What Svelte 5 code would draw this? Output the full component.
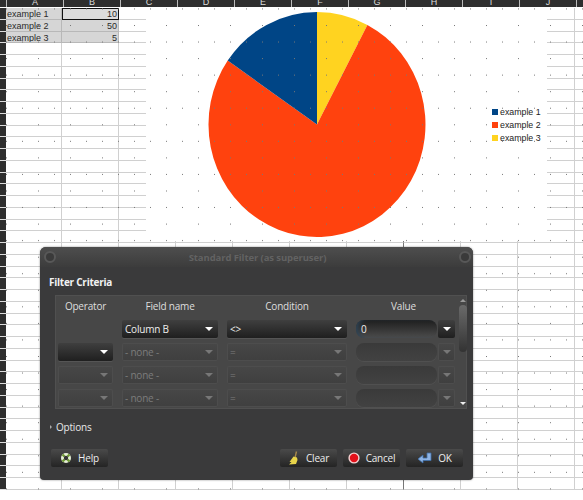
<script>
	const columns = ['A', 'B', 'C', 'D', 'E', 'F', 'G', 'H', 'I', 'J', 'K'];
	const rowCount = 41;
	const rows = Array.from({ length: rowCount }, (_, i) => i);

	const sample = [
		['example 1', 10],
		['example 2', 50],
		['example 3', 5]
	];

	// chart is an ellipse, LibreOffice stretches it with the frame
	const cx = 317;
	const cy = 124.5;
	const rx = 108.5;
	const ry = 112.5;

	function point(value) {
		const a = (value / 65) * Math.PI * 2;
		return `${(cx + rx * Math.sin(a)).toFixed(1)} ${(cy - ry * Math.cos(a)).toFixed(1)}`;
	}

	function slice(from, to) {
		const large = to - from > 32.5 ? 1 : 0;
		return `M${cx} ${cy}L${point(from)}A${rx} ${ry} 0 ${large} 1 ${point(to)}Z`;
	}

	const slices = [
		{ color: '#ffd320', d: slice(0, 5) },
		{ color: '#ff420e', d: slice(5, 55) },
		{ color: '#004586', d: slice(55, 65) }
	];

	const legend = [
		{ label: 'example 1', color: '#004586', y: 112 },
		{ label: 'example 2', color: '#ff420e', y: 125 },
		{ label: 'example 3', color: '#ffd320', y: 138 }
	];

	const filters = [
		{ field: 'Column B', condition: '<>', value: '0', active: true, noOp: true },
		{ field: '- none -', condition: '=', value: '', active: false, opActive: true },
		{ field: '- none -', condition: '=', value: '', active: false },
		{ field: '- none -', condition: '=', value: '', active: false }
	];
</script>

<div class="sheet">
	<div class="col-head">
		<span class="corner"></span>
		{#each columns as c}
			<span class="col-label">{c}</span>
		{/each}
	</div>
	{#each rows as r}
		<div class="row">
			<span class="row-label"></span>
			{#each columns as c, i}
				<span
					class="cell"
					class:selected={r < 3 && i < 2}
					class:cursor={r === 0 && i === 1}
					class:num={i === 1}
					class:page-break={i === 6}
				>
					{#if r < 3 && i < 2}{sample[r][i]}{/if}
				</span>
			{/each}
		</div>
	{/each}

	<svg class="canvas" width="583" height="500" viewBox="0 0 583 500">
		<defs>
			<pattern id="dots" patternUnits="userSpaceOnUse" x="6" y="25" width="32" height="33.1">
				<rect x="0" y="0" width="1" height="1" fill="#777" />
				<rect x="0" y="16.5" width="1" height="1" fill="#777" />
				<rect x="16" y="16.5" width="1" height="1" fill="#777" />
			</pattern>
		</defs>
		<rect x="146" y="8" width="401" height="233" fill="#fff" />
		{#each slices as s}
			<path d={s.d} fill={s.color} />
		{/each}
		{#each legend as l}
			<rect x="492" y={l.y - 3} width="6" height="6" fill={l.color} />
			<text x="500" y={l.y + 3} class="legend">{l.label}</text>
		{/each}
		<rect x="6" y="8" width="577" height="492" fill="url(#dots)" />
	</svg>

	<div class="dialog">
		<div class="titlebar">
			<span class="win-btn"></span>
			<span class="title">Standard Filter (as superuser)</span>
			<span class="win-btn"></span>
		</div>
		<div class="body">
			<div class="heading">Filter Criteria</div>
			<div class="panel">
				<div class="table">
					<div class="th">Operator</div>
					<div class="th">Field name</div>
					<div class="th">Condition</div>
					<div class="th value-head">Value</div>
					{#each filters as f}
						{#if f.noOp}
							<span></span>
						{:else}
							<div class="combo" class:off={!f.opActive}><span></span><i></i></div>
						{/if}
						<div class="combo" class:off={!f.active}><span>{f.field}</span><i></i></div>
						<div class="combo" class:off={!f.active}><span>{f.condition}</span><i></i></div>
						<div class="value-cell">
							<div class="entry" class:off={!f.active}>{f.value}</div>
							<div class="drop" class:off={!f.active}><i></i></div>
						</div>
					{/each}
				</div>
				<div class="scrollbar">
					<b class="up"></b>
					<div class="thumb"></div>
					<b class="down"></b>
				</div>
			</div>
			<div class="options"><b></b>Options</div>
			<div class="buttons">
				<button class="help">
					<svg width="12" height="12" viewBox="0 0 12 12">
						<circle cx="6" cy="6" r="5" fill="#e8f0d8" />
						<path d="M2.5 2.5L4.5 4.5M9.5 2.5L7.5 4.5M2.5 9.5L4.5 7.5M9.5 9.5L7.5 7.5" stroke="#6f9a35" stroke-width="2.4" />
						<circle cx="6" cy="6" r="2.2" fill="#333" />
					</svg>
					Help
				</button>
				<span class="spacer"></span>
				<button>
					<svg width="12" height="14" viewBox="0 0 12 14">
						<path d="M8.5 0.5L7.2 6" stroke="#a8894a" stroke-width="1.4" />
						<path d="M5.5 5.5L9 6.5L9.5 9L8 13L1 13.5L3.5 11L1.5 11Z" fill="#e8d44a" />
					</svg>
					Clear
				</button>
				<button>
					<svg width="12" height="12" viewBox="0 0 12 12">
						<circle cx="6" cy="6" r="5.6" fill="#f2d0d0" />
						<circle cx="6" cy="6" r="4.2" fill="#e3101a" />
					</svg>
					Cancel
				</button>
				<button>
					<svg width="15" height="12" viewBox="0 0 15 12">
						<path d="M14 1H10V6H6V3L1 7L6 11V8.5H14Z" fill="#8fb4e4" stroke="#3f6ea8" stroke-width="0.8" />
					</svg>
					OK
				</button>
			</div>
		</div>
	</div>
</div>

<style>
	:global(body) {
		margin: 0;
		background: #fff;
	}

	.sheet {
		position: relative;
		width: 583px;
		height: 500px;
		overflow: hidden;
		font-family: 'Liberation Sans', Arial, sans-serif;
		font-size: 9px;
		color: #2a2a2a;
	}

	.col-head {
		display: flex;
		height: 7px;
		margin-bottom: 1px;
		overflow: hidden;
		background: #2e2e2e;
	}

	.corner {
		flex: 0 0 6px;
	}

	.col-label {
		flex: 0 0 57px;
		box-sizing: border-box;
		border-left: 1px solid #bbb;
		color: #ddd;
		line-height: 0;
		padding-top: 2px;
		text-align: center;
	}

	.col-label:first-of-type {
		flex-basis: 56px;
	}

	.row {
		display: flex;
		height: 11.75px;
	}

	.row-label {
		flex: 0 0 6px;
		box-sizing: border-box;
		background: #2e2e2e;
		border-bottom: 1px solid #ddd;
	}

	.cell {
		flex: 0 0 57px;
		box-sizing: border-box;
		border-bottom: 1px solid #d0d0d0;
		border-right: 1px solid #d0d0d0;
		padding: 0 1px;
		line-height: 12px;
		white-space: nowrap;
		overflow: hidden;
	}

	.row-label + .cell {
		flex-basis: 56px;
	}

	.selected {
		background: #d6d6d6;
		border-color: #b8b8b8;
	}

	.num {
		text-align: right;
	}

	.cursor {
		background: #dcdcdc;
		outline: 1px solid #111;
		outline-offset: -1px;
		border-color: #111;
	}

	.page-break {
		border-right-color: #777;
	}

	.canvas {
		position: absolute;
		top: 0;
		left: 0;
	}

	.legend {
		font-size: 8.8px;
		fill: #222;
	}

	.dialog {
		position: absolute;
		top: 247px;
		left: 40px;
		width: 433px;
		height: 233px;
		box-sizing: border-box;
		border-radius: 6px 6px 4px 4px;
		background: #3a3a3b;
		box-shadow: 0 0 2px rgba(0, 0, 0, 0.5);
		font-family: 'Open Sans', sans-serif;
		font-size: 10px;
		letter-spacing: -0.2px;
		color: #e4e4e4;
		display: flex;
		flex-direction: column;
	}

	.titlebar {
		display: flex;
		align-items: center;
		justify-content: space-between;
		height: 20px;
		padding: 0 2px 0 4px;
		border-radius: 6px 6px 0 0;
		background: linear-gradient(#4e4e4e, #3c3c3c);
	}

	.win-btn {
		width: 8px;
		height: 8px;
		border: 2px solid #585858;
		border-radius: 50%;
		background: #3a3a3a;
	}

	.title {
		font-size: 9.5px;
		font-weight: 700;
		letter-spacing: -0.1px;
		color: #626262;
	}

	.body {
		flex: 1;
		display: flex;
		flex-direction: column;
		padding: 8px 10px 13px 9px;
		min-height: 0;
	}

	.heading {
		font-weight: 700;
		color: #f2f2f2;
		line-height: 14px;
		margin-bottom: 6px;
		font-size: 10px;
		letter-spacing: -0.25px;
	}

	.panel {
		display: flex;
		box-sizing: border-box;
		width: 412px;
		height: 114px;
		margin-left: 6px;
		padding: 0 1px 0 2px;
		border: 1px solid #505050;
		background: #474747;
	}

	.table {
		display: grid;
		grid-template-columns: 55px 96px 120px 99px;
		grid-template-rows: 19px repeat(4, 18px);
		column-gap: 9px;
		row-gap: 5px;
	}

	.th {
		text-align: center;
		line-height: 20px;
		color: #dedede;
		grid-row: 1;
	}

	.value-head {
		padding-right: 4px;
	}

	.combo {
		display: flex;
		align-items: center;
		justify-content: space-between;
		padding: 0 5px 0 3px;
		border-radius: 2px;
		background: linear-gradient(#3f3f3f, #1f1f1f);
		color: #eee;
		box-shadow: 0 1px 0 #555;
	}

	.combo i,
	.drop i {
		width: 0;
		height: 0;
		border-left: 4px solid transparent;
		border-right: 4px solid transparent;
		border-top: 4px solid #fff;
	}

	.combo.off,
	.drop.off {
		background: linear-gradient(#474747, #3f3f3f);
		color: #7c7c7c;
		box-shadow: 0 0 0 1px #4d4d4d inset;
	}

	.off i {
		border-top-color: #777;
	}

	.value-cell {
		display: flex;
		gap: 1px;
	}

	.entry {
		flex: 1;
		display: flex;
		align-items: center;
		padding-left: 5px;
		border-radius: 8px;
		background: linear-gradient(#1e1e1e, #4c4c4c);
		color: #eee;
		box-shadow: inset 4px 0 4px -2px #2c4458;
	}

	.entry.off {
		background: linear-gradient(#3a3a3a, #424242);
		box-shadow: 0 1px 0 #505050;
	}

	.drop {
		flex: 0 0 17px;
		display: flex;
		align-items: center;
		justify-content: center;
		border-radius: 2px;
		background: linear-gradient(#3f3f3f, #1f1f1f);
	}

	.scrollbar {
		flex: 0 0 9px;
		margin-left: 3px;
		display: flex;
		flex-direction: column;
		align-items: center;
		padding: 3px 0;
		box-sizing: border-box;
	}

	.scrollbar b {
		width: 0;
		height: 0;
		border-left: 3px solid transparent;
		border-right: 3px solid transparent;
	}

	.up {
		border-bottom: 3px solid #999;
	}

	.down {
		margin-top: auto;
		border-top: 3px solid #eee;
	}

	.thumb {
		width: 8px;
		height: 47px;
		margin-top: 3px;
		border-radius: 4px;
		background: linear-gradient(#6a6a6a, #333);
	}

	.options {
		display: flex;
		align-items: center;
		gap: 4px;
		margin-top: 11px;
		line-height: 14px;
		color: #e8e8e8;
	}

	.options b {
		width: 0;
		height: 0;
		margin-left: 1px;
		border-top: 2.5px solid transparent;
		border-bottom: 2.5px solid transparent;
		border-left: 2.5px solid #aaa;
	}

	.buttons {
		display: flex;
		align-items: center;
		gap: 6px;
		margin-top: auto;
		margin-left: 2px;
	}

	.spacer {
		flex: 1;
	}

	button {
		box-sizing: border-box;
		display: flex;
		align-items: center;
		justify-content: center;
		gap: 6px;
		width: 57px;
		height: 18px;
		padding: 0;
		border: 0;
		border-radius: 2px;
		background: linear-gradient(#4a4a4a, #242424);
		font: inherit;
		letter-spacing: inherit;
		color: #eee;
	}
</style>
